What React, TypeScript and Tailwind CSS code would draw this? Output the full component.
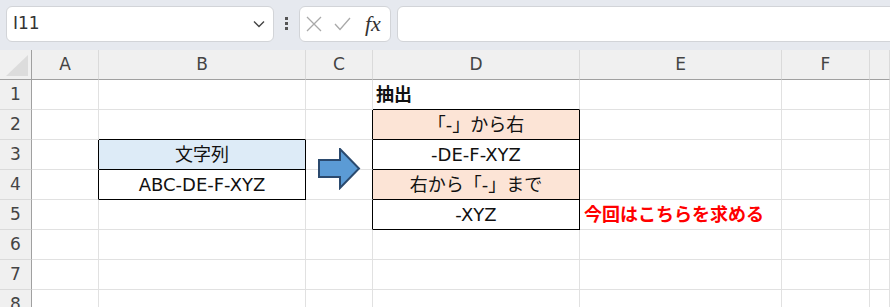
import React from "react";

const cellFont = { fontFamily: '"DejaVu Sans", "Noto Sans CJK JP", sans-serif' };
const uiFont = { fontFamily: '"DejaVu Sans", "Liberation Sans", sans-serif' };

const cols = ["A", "B", "C", "D", "E", "F", ""];

type Cell = { text?: string; cls?: string };

// border / fill / text per cell, keyed "col+row"
const cells: Record<string, Cell> = {
  B2: { cls: "border-b-black" },
  A3: { cls: "border-r-black" },
  A4: { cls: "border-r-black" },
  B3: { text: "文字列", cls: "border-r-black border-b-black bg-[#ddebf7] justify-center" },
  B4: { text: "ABC-DE-F-XYZ", cls: "border-r-black border-b-black justify-center" },
  D1: { text: "抽出", cls: "border-b-black font-bold pl-[3px]" },
  C2: { cls: "border-r-black" },
  C3: { cls: "border-r-black" },
  C4: { cls: "border-r-black" },
  C5: { cls: "border-r-black" },
  D2: { text: "「-」から右", cls: "border-r-black border-b-black bg-[#fce4d6] justify-center" },
  D3: { text: "-DE-F-XYZ", cls: "border-r-black border-b-black justify-center" },
  D4: { text: "右から「-」まで", cls: "border-r-black border-b-black bg-[#fce4d6] justify-center" },
  D5: { text: "-XYZ", cls: "border-r-black border-b-black justify-center" },
  E5: { text: "今回はこちらを求める", cls: "font-bold pl-[4px]" },
};

export default function App() {
  return (
    <div className="relative w-[890px] h-[307px] overflow-hidden bg-white">
      {/* formula bar */}
      <div className="flex items-start h-[50px] bg-[#e6e9ef] pt-[6px] pl-[6px] overflow-hidden">
        <div className="flex items-center w-[268px] h-[36px] shrink-0 bg-white border border-[#d2d4d8] rounded-[6px] pl-[6px] pr-[8px]">
          <span className="flex-1 text-[17px] text-[#333]" style={uiFont}>I11</span>
          <svg width="12" height="8" viewBox="0 0 12 8" fill="none" stroke="#444" strokeWidth="1.4">
            <path d="M1 1.5 L6 6.5 L11 1.5" />
          </svg>
        </div>
        <div className="flex flex-col gap-[2px] w-[3px] ml-[11px] mr-[11px] mt-[11px] shrink-0">
          <span className="block w-[3px] h-[3px] bg-[#555]" />
          <span className="block w-[3px] h-[3px] bg-[#555]" />
          <span className="block w-[3px] h-[3px] bg-[#555]" />
        </div>
        <div className="flex items-center w-[92px] h-[36px] shrink-0 bg-white border border-[#d2d4d8] rounded-[6px] pl-[6px]">
          <svg width="16" height="16" viewBox="0 0 16 16" stroke="#a9a9a9" strokeWidth="1.3">
            <path d="M1 1 L15 15 M15 1 L1 15" />
          </svg>
          <svg className="ml-[12px]" width="17" height="14" viewBox="0 0 17 14" fill="none" stroke="#a9a9a9" strokeWidth="1.3">
            <path d="M1 7 L6 12.5 L16 1" />
          </svg>
          <span className="ml-[14px] text-[22px] italic text-[#333] leading-none" style={{ fontFamily: '"Liberation Serif", serif' }}>
            fx
          </span>
        </div>
        <div className="ml-[6px] h-[36px] w-[600px] shrink-0 bg-white border border-[#d2d4d8] rounded-[6px]" />
      </div>

      {/* sheet grid */}
      <div className="grid grid-cols-[32px_67px_207px_67px_207px_202px_88px_1fr] auto-rows-[30px]" style={cellFont}>
        <div className="relative bg-[#f0f0f0] border-r border-b border-r-[#a0a0a0] border-b-[#a0a0a0]">
          <svg className="absolute left-[6px] top-[5px]" width="22" height="21" viewBox="0 0 22 21">
            <polygon points="22,0 22,21 0,21" fill="#dcdcdc" />
          </svg>
        </div>
        {cols.map((c, i) => (
          <div
            key={"h" + i}
            className="flex items-center justify-center bg-[#f0f0f0] border-r border-b border-r-[#dadada] border-b-[#a0a0a0] text-[17px] text-[#444]"
            style={uiFont}
          >
            {c}
          </div>
        ))}
        {[1, 2, 3, 4, 5, 6, 7, 8].map((r) => (
          <React.Fragment key={r}>
            <div
              className="flex items-center justify-center bg-[#f0f0f0] border-r border-b border-r-[#a0a0a0] border-b-[#dadada] text-[17px] text-[#444]"
              style={uiFont}
            >
              {r}
            </div>
            {cols.map((c, i) => {
              const key = c + r;
              const cell = cells[key] || {};
              return (
                <div
                  key={c + i}
                  className={
                    "flex items-center whitespace-nowrap overflow-visible text-[18px] border-r border-b border-[#e1e1e1] " +
                    (key === "E5" ? "text-[#ff0000] " : "text-[#111] ") +
                    (cell.cls || "")
                  }
                >
                  {cell.text}
                </div>
              );
            })}
          </React.Fragment>
        ))}
      </div>

      {/* block arrow shape over C3:C4 */}
      <svg className="absolute left-[318px] top-[148px]" width="44" height="42" viewBox="0 0 44 42">
        <polygon
          points="1,12 22,12 22,1 41,20.5 22,40 22,29 1,29"
          fill="#5b9bd5"
          stroke="#2b4a6e"
          strokeWidth="2"
          strokeLinejoin="miter"
        />
      </svg>
    </div>
  );
}
